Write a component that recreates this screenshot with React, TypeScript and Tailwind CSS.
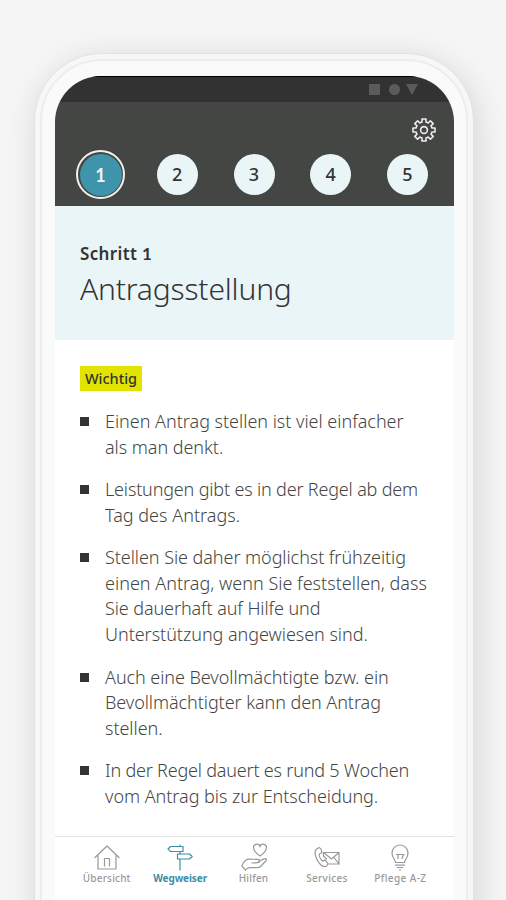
import type { ReactNode } from 'react';

type Line = { text: string; className?: string };

const steps = [1, 2, 3, 4, 5];

const items: Line[][] = [
  [
    { text: 'Einen Antrag stellen ist viel einfacher', className: 'tracking-[-0.02px]' },
    { text: 'als man denkt.', className: 'tracking-[-0.05px]' },
  ],
  [
    { text: 'Leistungen gibt es in der Regel ab dem', className: 'tracking-[-0.17px]' },
    { text: 'Tag des Antrags.', className: 'tracking-[0.02px]' },
  ],
  [
    { text: 'Stellen Sie daher möglichst frühzeitig', className: 'tracking-[-0.06px]' },
    { text: 'einen Antrag, wenn Sie feststellen, dass', className: 'tracking-[0.01px]' },
    { text: 'Sie dauerhaft auf Hilfe und', className: 'tracking-[-0.1px]' },
    { text: 'Unterstützung angewiesen sind.', className: 'tracking-[-0.04px]' },
  ],
  [
    { text: 'Auch eine Bevollmächtigte bzw. ein', className: 'tracking-[-0.06px]' },
    { text: 'Bevollmächtigter kann den Antrag', className: 'tracking-[-0.07px]' },
    { text: 'stellen.', className: 'tracking-[-0.05px]' },
  ],
  [
    { text: 'In der Regel dauert es rund 5 Wochen', className: 'tracking-[-0.2px]' },
    { text: 'vom Antrag bis zur Entscheidung.', className: 'tracking-[-0.04px]' },
  ],
];

const Icon = ({ children }: { children: ReactNode }) => (
  <svg
    viewBox="0 0 28 28"
    className="h-7 w-7"
    fill="none"
    stroke="currentColor"
    strokeWidth="1.2"
    strokeLinecap="round"
    strokeLinejoin="round"
  >
    {children}
  </svg>
);

const HomeIcon = () => (
  <Icon>
    <path d="M2 14.5 14 3l12 11.5" />
    <path d="M5 12.5V26h18V12.5" />
    <path d="M11.5 23v-7.500h5V23" />
  </Icon>
);

const SignIcon = () => (
  <Icon>
    <path d="M4.500 3.500H17v5H4.500L2 6z" />
    <path d="M11.500 11H23.500l2.700 2.500-2.700 2.500H11.500z" />
    <path d="M14 2v1.500M14 8.500V11M14 16V27" />
  </Icon>
);

const HandIcon = () => (
  <Icon>
    <path d="M20 13c-3.500-2.500-6.300-5-6.300-7.800A3.200 3.200 0 0 1 20 3.800a3.200 3.200 0 0 1 6.300 1.400C26.300 8 23.500 10.500 20 13z" />
    <path d="M5.500 27 1.800 23c1.500-3.500 3.500-6.500 7-6.800 3.500-.3 5.500.3 9 .2 2.500 0 2.500 3.200-.3 3.300L12 20" />
    <path d="M18.500 18.500l5.500-2.600c2.200-.9 3.300.6 1.800 2.100L21 23c-1.200 1.300-2.500 1.700-4 1.700H9.500c-1.700 0-2.800.8-4 2.300" />
  </Icon>
);

const PhoneIcon = () => (
  <Icon>
    <path d="M6 4.500 3 6.500c-2 2.500-.5 9 3 13.300 2.500 3.200 5.500 4.200 7.500 3.400l1.500-2.500-3-3.800-2.500 1.200C7.500 16.500 6 13 6.200 11l2.500-1.200C9 7.500 8 5.500 6 4.500z" />
    <path d="M10.500 9.500h15.500v11.500h-11M10.500 9.500l8 6.500 7.500-6.500M26 21l-5-6.500M10.500 9.500v3.500l3 3" />
  </Icon>
);

const BulbIcon = () => (
  <Icon>
    <path d="M9.500 19.500c0-3-3.500-4.500-3.500-9.500a8 8 0 0 1 16 0c0 5-3.500 6.500-3.500 9.500z" />
    <path d="M10.500 11.500h7.500M12 11.500v4M16 15.500l1.500-4" />
    <path d="M9.500 22.200h9M11 24.500h6M13.500 26.800h1" />
  </Icon>
);

const tabs = [
  { label: 'Übersicht', icon: <HomeIcon />, className: 'tracking-[0.2px]' },
  { label: 'Wegweiser', icon: <SignIcon />, active: true, className: 'tracking-[-0.1px]' },
  { label: 'Hilfen', icon: <HandIcon />, className: 'tracking-[0.2px]' },
  { label: 'Services', icon: <PhoneIcon />, className: 'tracking-[0.3px]' },
  { label: 'Pflege A-Z', icon: <BulbIcon />, className: 'tracking-[0.4px]' },
];

// one tooth of the gear, repeated every 45 degrees
const tooth: [number, number][] = [
  [-22.5, 8.2],
  [-14, 8.2],
  [-10.5, 11.2],
  [10.5, 11.2],
  [14, 8.2],
];

const gearPoints = Array.from({ length: 8 }, (_, i) =>
  tooth.map(([deg, r]) => {
    const a = ((deg + i * 45) * Math.PI) / 180;
    return `${(12 + r * Math.sin(a)).toFixed(2)},${(12 - r * Math.cos(a)).toFixed(2)}`;
  }).join(' ')
).join(' ');

const GearIcon = () => (
  <svg viewBox="0 0 24 24" className="h-6 w-6" fill="none" stroke="#ededed" strokeWidth="1.6" strokeLinejoin="round">
    <polygon points={gearPoints} />
    <circle cx="12" cy="12" r="3.4" />
  </svg>
);

const StatusBar = () => (
  <div className="flex h-[26px] items-center justify-end gap-[9px] border-t border-black bg-[#323232] pr-[36px] text-[#5b5b5b]">
    <span className="h-[11px] w-[11px] bg-current" />
    <span className="h-[11px] w-[11px] rounded-full bg-current" />
    <svg viewBox="0 0 12 11" className="-ml-[3px] h-[11px] w-3" fill="currentColor">
      <path d="M0 0h12L6 11z" />
    </svg>
  </div>
);

const Step = ({ step }: { step: number }) =>
  step === 1 ? (
    <div className="-m-1 flex h-[49px] w-[49px] items-center justify-center rounded-full border-2 border-[#f1f1ee]">
      <div className="flex h-[42px] w-[42px] items-center justify-center rounded-full bg-[#3e94ab] font-['Lato'] font-bold text-[#eaf5f8]">
        {step}
      </div>
    </div>
  ) : (
    <div className="flex h-[41px] w-[41px] items-center justify-center rounded-full bg-[#eaf5f8] pb-px font-medium text-[#333]">
      {step}
    </div>
  );

export default function App() {
  return (
    <div className="h-[900px] w-[506px] overflow-hidden bg-[#f5f5f5] pt-[53px] pl-[34px] font-['Noto_Sans','Open_Sans',sans-serif] text-[#444644]">
      <div className="h-[1000px] w-[440px] rounded-[68px] border border-[#e2e2e2] bg-[#f7f7f7] p-[5px] shadow-[3px_6px_32px_rgba(0,0,0,0.13)]">
        <div className="h-full rounded-[62px] border-2 border-[#ededed] bg-[#fafafa] px-[13px] pt-[15px]">
          <div className="h-[824px] w-[399px] overflow-hidden rounded-t-[46px] bg-white">
            <StatusBar />
            <header className="flex h-[104px] flex-col bg-[#444644]">
              <div className="flex justify-end pt-4 pr-[18px]">
                <GearIcon />
              </div>
              <div className="mt-3 flex justify-between pr-[26px] pl-[25px] text-[18px] leading-none">
                {steps.map((step) => (
                  <Step key={step} step={step} />
                ))}
              </div>
            </header>
            <section className="h-[134px] bg-[#eaf5f8] pt-[36px] pl-[25px] text-[#333]">
              <p className="text-[17px] leading-6 font-semibold tracking-[0.35px]">
                Schritt <span className="font-['Lato'] font-bold">1</span>
              </p>
              <h1 className="text-[30px] leading-[46px] font-light tracking-[-0.17px]">Antragsstellung</h1>
            </section>
            <main className="h-[496px] pt-[26px] pr-4 pl-[25px]">
              <span className="flex h-[25px] w-[62px] items-center justify-center bg-[#e2e400] text-[14.5px] font-medium text-[#333]">
                Wichtig
              </span>
              <ul className="mt-[18px] flex flex-col gap-[17.2px]">
                {items.map((item, i) => (
                  <li key={i} className="flex">
                    <span className="mt-[8px] mr-4 h-[9px] w-[9px] shrink-0 bg-[#333]" />
                    <p className="text-[18px] leading-[25.5px] font-light whitespace-nowrap">
                      {item.map((line) => (
                        <span key={line.text} className={`block ${line.className ?? ''}`}>
                          {line.text}
                        </span>
                      ))}
                    </p>
                  </li>
                ))}
              </ul>
            </main>
            <nav className="flex h-16 border-t border-[#e2e2e2] pt-[6px] pr-[17px] pl-[15px]">
              {tabs.map((tab) => (
                <div
                  key={tab.label}
                  className={`flex flex-1 flex-col items-center whitespace-nowrap ${tab.active ? 'font-bold text-[#3e8ea6]' : 'font-medium text-[#999]'}`}
                >
                  {tab.icon}
                  <span className={`text-[10px] leading-[14px] ${tab.className}`}>{tab.label}</span>
                </div>
              ))}
            </nav>
          </div>
        </div>
      </div>
    </div>
  );
}
